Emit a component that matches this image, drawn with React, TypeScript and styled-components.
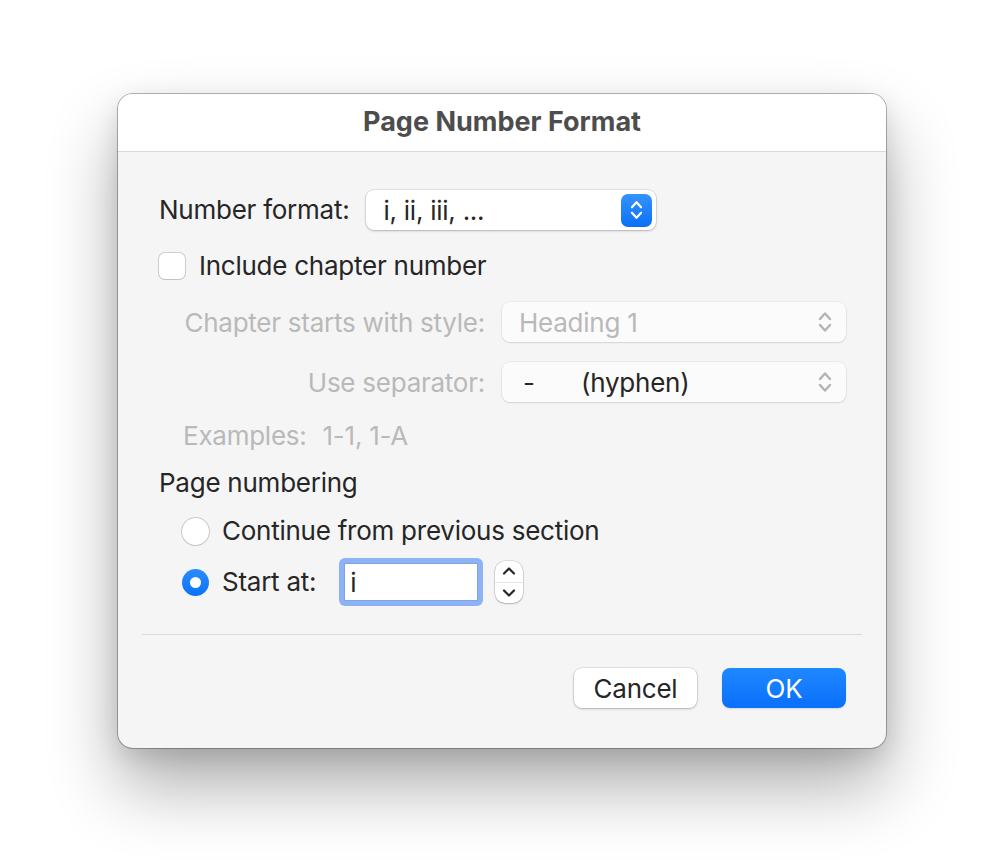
import React from "react";
import styled, { createGlobalStyle } from "styled-components";

const Global = createGlobalStyle`
  html, body { margin: 0; padding: 0; background: #ffffff; }
  body { font-family: "Inter", "Liberation Sans", sans-serif; -webkit-font-smoothing: antialiased; }
  * { box-sizing: border-box; }
`;

const Stage = styled.div`
  width: 994px;
  height: 864px;
  padding: 94px 0 0 118px;
  background: #ffffff;
`;

const Dialog = styled.div`
  width: 768px;
  border-radius: 15px;
  background: #f5f5f5;
  overflow: hidden;
  box-shadow: 0 0 0 1px rgba(0, 0, 0, 0.28), 0 38px 70px rgba(0, 0, 0, 0.32),
    0 8px 24px rgba(0, 0, 0, 0.12);
  color: #262626;
  font-size: 26px;
  letter-spacing: -0.25px;
`;

const TitleBar = styled.div`
  height: 58px;
  padding-bottom: 3px;
  background: #ffffff;
  border-bottom: 1px solid #d9d9d9;
  display: flex;
  align-items: center;
  justify-content: center;
  font-weight: 700;
  color: #4d4d4d;
  font-size: 27px;
  letter-spacing: 0px;
`;

const Content = styled.div`
  display: flex;
  flex-direction: column;
  padding: 38px 40px 0 41px;
`;

const Row = styled.div<{ $mt?: number; $h?: number; $indent?: number; $gap?: number }>`
  display: flex;
  align-items: center;
  margin-top: ${(p) => p.$mt ?? 0}px;
  height: ${(p) => p.$h ?? 30}px;
  padding-left: ${(p) => p.$indent ?? 0}px;
  gap: ${(p) => p.$gap ?? 0}px;
  white-space: nowrap;
`;

const Label = styled.span<{ $muted?: boolean }>`
  color: ${(p) => (p.$muted ? "#b9b9b9" : "#262626")};
  line-height: 30px;
`;

const PopUp = styled.div<{ $width: number; $disabled?: boolean }>`
  width: ${(p) => p.$width}px;
  height: 40px;
  border-radius: 8px;
  background: ${(p) => (p.$disabled ? "#fbfbfb" : "#ffffff")};
  box-shadow: ${(p) =>
    p.$disabled
      ? "0 0 0 0.5px rgba(0,0,0,0.08), 0 1px 2px rgba(0,0,0,0.1)"
      : "0 0 0 0.5px rgba(0,0,0,0.14), 0 1px 2.5px rgba(0,0,0,0.22)"};
  display: flex;
  align-items: center;
  padding: 0 4px 0 17px;
  color: #262626;
`;

const PopUpText = styled.span<{ $muted?: boolean }>`
  flex: 1;
  color: ${(p) => (p.$muted ? "#b9b9b9" : "#262626")};
  display: flex;
  align-items: center;
`;

const Hyphen = styled.span`
  width: 62px;
  padding-left: 4px;
`;

const BlueArrows = styled.div`
  width: 31px;
  height: 33px;
  border-radius: 7px;
  background: linear-gradient(#3593ff, #0b6ff6);
  display: flex;
  align-items: center;
  justify-content: center;
`;

const GrayArrows = styled.div`
  width: 31px;
  height: 33px;
  display: flex;
  align-items: center;
  justify-content: center;
  margin-right: 2px;
`;

const Checkbox = styled.div`
  width: 26px;
  height: 26px;
  border-radius: 6px;
  background: #ffffff;
  box-shadow: 0 0 0 1px rgba(0, 0, 0, 0.16), 0 1px 1px rgba(0, 0, 0, 0.06);
`;

const ChapterGrid = styled.div`
  display: grid;
  grid-template-columns: 302px 344px;
  column-gap: 17px;
  row-gap: 20px;
  margin-top: 23px;
  padding-left: 24px;
  align-items: center;
`;

const GridLabel = styled.span`
  color: #b9b9b9;
  text-align: right;
  white-space: nowrap;
`;

const Examples = styled.div`
  margin-top: 19px;
  padding-left: 24px;
  color: #b9b9b9;
  line-height: 30px;
  white-space: nowrap;
  display: flex;
  gap: 16px;
`;

const Radio = styled.div<{ $on?: boolean }>`
  width: 27px;
  height: 27px;
  border-radius: 50%;
  flex: none;
  background: ${(p) => (p.$on ? "linear-gradient(#2a8cff, #0a72f5)" : "#ffffff")};
  box-shadow: ${(p) =>
    p.$on ? "none" : "0 0 0 1px rgba(0,0,0,0.17), 0 1px 1px rgba(0,0,0,0.05)"};
  display: flex;
  align-items: center;
  justify-content: center;
  &::after {
    content: "";
    display: ${(p) => (p.$on ? "block" : "none")};
    width: 11px;
    height: 11px;
    border-radius: 50%;
    background: #ffffff;
  }
`;

const FieldGroup = styled.div`
  display: flex;
  align-items: center;
  gap: 12px;
  margin-left: 10px;
`;

const FocusField = styled.div`
  width: 144px;
  height: 48px;
  border-radius: 6px;
  background: #8db2f6;
  padding: 5px;
`;

const FieldInner = styled.div`
  width: 100%;
  height: 100%;
  background: #ffffff;
  border: 1px solid #7fa3e3;
  display: flex;
  align-items: center;
  padding-left: 5px;
  color: #262626;
`;

const Stepper = styled.div`
  width: 28px;
  height: 42px;
  border-radius: 10px;
  background: #ffffff;
  box-shadow: 0 0 0 0.5px rgba(0, 0, 0, 0.18), 0 1px 2px rgba(0, 0, 0, 0.2);
  display: flex;
  flex-direction: column;
`;

const StepHalf = styled.div<{ $top?: boolean }>`
  flex: 1;
  display: flex;
  align-items: center;
  justify-content: center;
  border-bottom: ${(p) => (p.$top ? "1px solid #e6e6e6" : "none")};
`;

const Separator = styled.div`
  height: 1px;
  background: #dadada;
  margin: 28px 24px 0 24px;
`;

const Footer = styled.div`
  display: flex;
  justify-content: flex-end;
  gap: 25px;
  padding: 33px 40px 40px 0;
`;

const Button = styled.div<{ $primary?: boolean }>`
  width: ${(p) => (p.$primary ? 124 : 123)}px;
  height: 40px;
  border-radius: 8px;
  display: flex;
  align-items: center;
  justify-content: center;
  background: ${(p) => (p.$primary ? "linear-gradient(#1f88ff, #0a6ffb)" : "#ffffff")};
  color: ${(p) => (p.$primary ? "#ffffff" : "#262626")};
  box-shadow: ${(p) =>
    p.$primary
      ? "0 1px 2px rgba(0,0,0,0.12)"
      : "0 0 0 0.5px rgba(0,0,0,0.16), 0 1px 2.5px rgba(0,0,0,0.22)"};
`;

const Chevrons = ({ color, w = 14, h = 24 }: { color: string; w?: number; h?: number }) => (
  <svg width={w} height={h} viewBox="0 0 14 24" fill="none">
    <path d="M2 9 L7 3.5 L12 9" stroke={color} strokeWidth="2.4" strokeLinecap="round" strokeLinejoin="round" />
    <path d="M2 15 L7 20.5 L12 15" stroke={color} strokeWidth="2.4" strokeLinecap="round" strokeLinejoin="round" />
  </svg>
);

const Chevron = ({ up }: { up?: boolean }) => (
  <svg width="14" height="10" viewBox="0 0 14 10" fill="none">
    <path
      d={up ? "M2 7.5 L7 2.5 L12 7.5" : "M2 2.5 L7 7.5 L12 2.5"}
      stroke="#262626"
      strokeWidth="2.2"
      strokeLinecap="round"
      strokeLinejoin="round"
    />
  </svg>
);

export default function App() {
  return (
    <Stage>
      <Global />
      <Dialog>
        <TitleBar>Page Number Format</TitleBar>
        <Content>
          <Row $h={40} $gap={17}>
            <Label>Number format:</Label>
            <PopUp $width={290}>
              <PopUpText>i, ii, iii, ...</PopUpText>
              <BlueArrows>
                <Chevrons color="#ffffff" w={13} h={22} />
              </BlueArrows>
            </PopUp>
          </Row>
          <Row $mt={23} $h={26} $gap={14}>
            <Checkbox />
            <Label>Include chapter number</Label>
          </Row>
          <ChapterGrid>
            <GridLabel>Chapter starts with style:</GridLabel>
            <PopUp $width={344} $disabled>
              <PopUpText $muted>Heading 1</PopUpText>
              <GrayArrows>
                <Chevrons color="#b3b3b3" />
              </GrayArrows>
            </PopUp>
            <GridLabel>Use separator:</GridLabel>
            <PopUp $width={344} $disabled>
              <PopUpText>
                <Hyphen>-</Hyphen>(hyphen)
              </PopUpText>
              <GrayArrows>
                <Chevrons color="#b3b3b3" />
              </GrayArrows>
            </PopUp>
          </ChapterGrid>
          <Examples>
            <span>Examples:</span>
            <span>1-1, 1-A</span>
          </Examples>
          <Row $mt={17}>
            <Label>Page numbering</Label>
          </Row>
          <Row $mt={18} $indent={23} $gap={13}>
            <Radio />
            <Label>Continue from previous section</Label>
          </Row>
          <Row $mt={12} $h={48} $indent={23} $gap={13}>
            <Radio $on />
            <Label>Start at:</Label>
            <FieldGroup>
              <FocusField>
                <FieldInner>i</FieldInner>
              </FocusField>
              <Stepper>
                <StepHalf $top>
                  <Chevron up />
                </StepHalf>
                <StepHalf>
                  <Chevron />
                </StepHalf>
              </Stepper>
            </FieldGroup>
          </Row>
        </Content>
        <Separator />
        <Footer>
          <Button>Cancel</Button>
          <Button $primary>OK</Button>
        </Footer>
      </Dialog>
    </Stage>
  );
}
